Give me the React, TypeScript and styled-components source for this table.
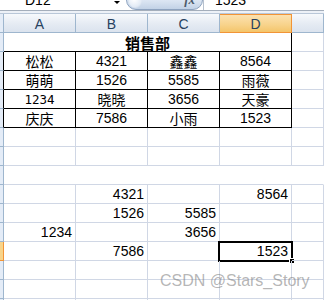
import styled, { createGlobalStyle, css } from 'styled-components'

const GRID = '#d0d7e5'
const HEAD_LINE = '#9eb6ce'

type Line = 'grid' | 'black' | 'none' | 'head'
type Face = 'num' | 'cjk' | 'mono'

const lineColor = (l: Line) =>
  l === 'black' ? '#000' : l === 'head' ? HEAD_LINE : l === 'none' ? 'transparent' : GRID

const table: string[][] = [
  ['松松', '4321', '鑫鑫', '8564'],
  ['萌萌', '1526', '5585', '雨薇'],
  ['1234', '晓晓', '3656', '天豪'],
  ['庆庆', '7586', '小雨', '1523'],
]

const loose: string[][] = [
  ['', '4321', '', '8564'],
  ['', '1526', '5585', ''],
  ['1234', '', '3656', ''],
  ['', '7586', '', '1523'],
]

const faceOf = (text: string, row: number, col: number): Face => {
  if (row === 2 && col === 0) return 'mono'
  return /^\d+$/.test(text) ? 'num' : 'cjk'
}

function App() {
  return (
    <>
      <GlobalStyle />
      <Sheet>
        <FormulaBar>
          <NameBox>
            <ClippedText>D12</ClippedText>
          </NameBox>
          <DropArrow />
          <FxButton>
            <Gloss />
            <FxLabel>fx</FxLabel>
          </FxButton>
          <FormulaInput>
            <ClippedText>1523</ClippedText>
          </FormulaInput>
        </FormulaBar>
        <Band />

        <HeaderRow>
          <RowHead $right="head" $bottom="head" />
          {['A', 'B', 'C', 'D'].map((c) => (
            <ColHead key={c} $active={c === 'D'}>
              {c}
            </ColHead>
          ))}
          <ColHead $fill />
        </HeaderRow>

        {/* row 1: merged title */}
        <Row>
          <RowHead $right="head" $bottom="head" />
          <Cell $span={4} $right="black" $bottom="black" $align="center" $face="cjk" $bold>
            销售部
          </Cell>
          <Cell $fill />
        </Row>

        {/* rows 2-5: bordered table */}
        {table.map((row, r) => (
          <Row key={`t${r}`}>
            <RowHead $right="black" $bottom="head" />
            {row.map((text, c) => (
              <Cell key={c} $right="black" $bottom="black" $align="center" $face={faceOf(text, r, c)}>
                {text}
              </Cell>
            ))}
            <Cell $fill />
          </Row>
        ))}

        {/* rows 6-7 */}
        {[0, 1].map((i) => (
          <Row key={`e${i}`}>
            <RowHead $right="head" $bottom="head" />
            {[0, 1, 2, 3].map((c) => (
              <Cell key={c} />
            ))}
            <Cell $fill />
          </Row>
        ))}

        {/* row 8: no inner lines */}
        <Row>
          <RowHead $right="head" $bottom="head" />
          <Cell $fill $right="none" />
        </Row>

        {/* rows 9-12: loose numbers */}
        {loose.map((row, r) => (
          <Row key={`l${r}`}>
            <RowHead $right="head" $bottom="head" $active={r === 3} />
            {row.map((text, c) => (
              <Cell key={c} $align="right" $face="num">
                {text}
                {r === 3 && c === 3 && (
                  <Selection>
                    <FillHandle />
                  </Selection>
                )}
              </Cell>
            ))}
            <Cell $fill />
          </Row>
        ))}

        {/* rows 13-15 */}
        {[0, 1, 2].map((i) => (
          <Row key={`f${i}`}>
            <RowHead $right="head" $bottom="head" />
            {[0, 1, 2, 3].map((c) => (
              <Cell key={c} />
            ))}
            <Cell $fill />
          </Row>
        ))}

        <Watermark>CSDN @Stars_Story</Watermark>
      </Sheet>
    </>
  )
}

export default App

const GlobalStyle = createGlobalStyle`
  html, body {
    margin: 0;
    padding: 0;
    background: #fff;
  }
  * {
    box-sizing: border-box;
  }
`

const Sheet = styled.div`
  position: relative;
  width: 324px;
  height: 300px;
  overflow: hidden;
  background: #fff;
  font-family: 'Liberation Sans', Arial, sans-serif;
`

const FormulaBar = styled.div`
  display: flex;
  height: 11px;
  overflow: hidden;
  background: #fff;
  border-bottom: 1px solid #a4aebb;
`

const ClippedText = styled.span`
  display: block;
  margin-top: -8px;
  line-height: 16px;
  font-size: 14px;
  color: #000;
`

const NameBox = styled.div`
  width: 113px;
  padding-left: 25px;
`

const DropArrow = styled.div`
  width: 0;
  height: 0;
  margin-left: 1px;
  margin-top: 1px;
  border-left: 3px solid transparent;
  border-right: 3px solid transparent;
  border-top: 3px solid #000;
`

const FxButton = styled.div`
  position: relative;
  width: 77px;
  height: 20px;
  margin-top: -10px;
  margin-left: 6px;
  border: 1px solid #8ea3bf;
  border-radius: 10px;
  background: linear-gradient(#f2f6fb, #dbe5f2 55%, #c2d2e6);
  display: flex;
  justify-content: flex-end;
`

const Gloss = styled.div`
  position: absolute;
  left: 2px;
  top: 4px;
  width: 13px;
  height: 13px;
  border-radius: 50%;
  background: radial-gradient(circle at 40% 35%, #ffffff, #e4ecf6 60%, #b9c8dc);
`

const FxLabel = styled.span`
  margin-top: 1px;
  margin-right: 7px;
  font-family: 'Liberation Serif', serif;
  font-style: italic;
  font-weight: bold;
  font-size: 13px;
  line-height: 16px;
  color: #4d5a6a;
`

const FormulaInput = styled.div`
  flex: 1;
  padding-left: 11px;
  border-left: 1px solid #b8c2cf;
`

const Band = styled.div`
  height: 2px;
  background: #edf1f7;
`

const HeaderRow = styled.div`
  display: flex;
  height: 20px;
  border-top: 1px solid #b9c7d8;
`

const Row = styled.div`
  display: flex;
  height: 19px;
`

const RowHead = styled.div<{ $right: Line; $bottom: Line; $active?: boolean }>`
  flex: 0 0 4px;
  background: ${(p) => (p.$active ? '#f8d48a' : '#e4ecf7')};
  border-right: 1px solid ${(p) => (p.$active ? '#f29436' : lineColor(p.$right))};
  border-bottom: 1px solid ${(p) => (p.$active ? '#f29436' : lineColor(p.$bottom))};
`

const ColHead = styled.div<{ $active?: boolean; $fill?: boolean }>`
  flex: ${(p) => (p.$fill ? '1 1 auto' : '0 0 72px')};
  display: flex;
  align-items: center;
  justify-content: center;
  font-size: 14px;
  line-height: 16px;
  padding-top: 1px;
  color: #27415f;
  background: linear-gradient(#f7f9fc, #e5ebf3 55%, #dbe3ee);
  border-right: 1px solid ${HEAD_LINE};
  border-bottom: 1px solid ${HEAD_LINE};
  ${(p) =>
    p.$active &&
    css`
      background: linear-gradient(#fbe2b0, #f8d48d 55%, #f4c56b);
      border: 1px solid #f29436;
      border-left: none;
    `}
`

const faces: Record<Face, ReturnType<typeof css>> = {
  num: css`
    font-family: 'Liberation Sans', Arial, sans-serif;
    font-size: 14px;
  `,
  cjk: css`
    font-family: 'Noto Sans CJK SC', sans-serif;
    font-size: 14px;
  `,
  mono: css`
    font-family: 'DejaVu Sans Mono', monospace;
    font-size: 12.5px;
  `,
}

const Cell = styled.div<{
  $span?: number
  $fill?: boolean
  $right?: Line
  $bottom?: Line
  $align?: 'center' | 'right'
  $face?: Face
  $bold?: boolean
}>`
  position: relative;
  flex: ${(p) => (p.$fill ? '1 1 auto' : `0 0 ${(p.$span ?? 1) * 72}px`)};
  display: flex;
  align-items: center;
  justify-content: ${(p) => (p.$align === 'right' ? 'flex-end' : 'center')};
  padding: 1px ${(p) => (p.$align === 'right' ? '3px' : '0')} 0 0;
  line-height: 17px;
  color: #000;
  white-space: nowrap;
  font-weight: ${(p) => (p.$bold ? 700 : 400)};
  border-right: 1px solid ${(p) => lineColor(p.$right ?? 'grid')};
  border-bottom: 1px solid ${(p) => lineColor(p.$bottom ?? 'grid')};
  ${(p) => faces[p.$face ?? 'num']}
  ${(p) =>
    p.$bold &&
    css`
      font-size: 15px;
    `}
`

const Selection = styled.div`
  position: absolute;
  left: -2px;
  top: -1px;
  width: 75px;
  height: 21px;
  border: 2px solid #000;
  pointer-events: none;
`

const FillHandle = styled.div`
  position: absolute;
  right: -4px;
  bottom: -4px;
  width: 6px;
  height: 6px;
  background: #000;
  border: 1px solid #fff;
`

const Watermark = styled.div`
  position: absolute;
  left: 160px;
  top: 272px;
  font-family: 'Liberation Sans', Arial, sans-serif;
  font-size: 16px;
  line-height: 18px;
  color: rgba(120, 120, 120, 0.55);
  white-space: nowrap;
  pointer-events: none;
`
